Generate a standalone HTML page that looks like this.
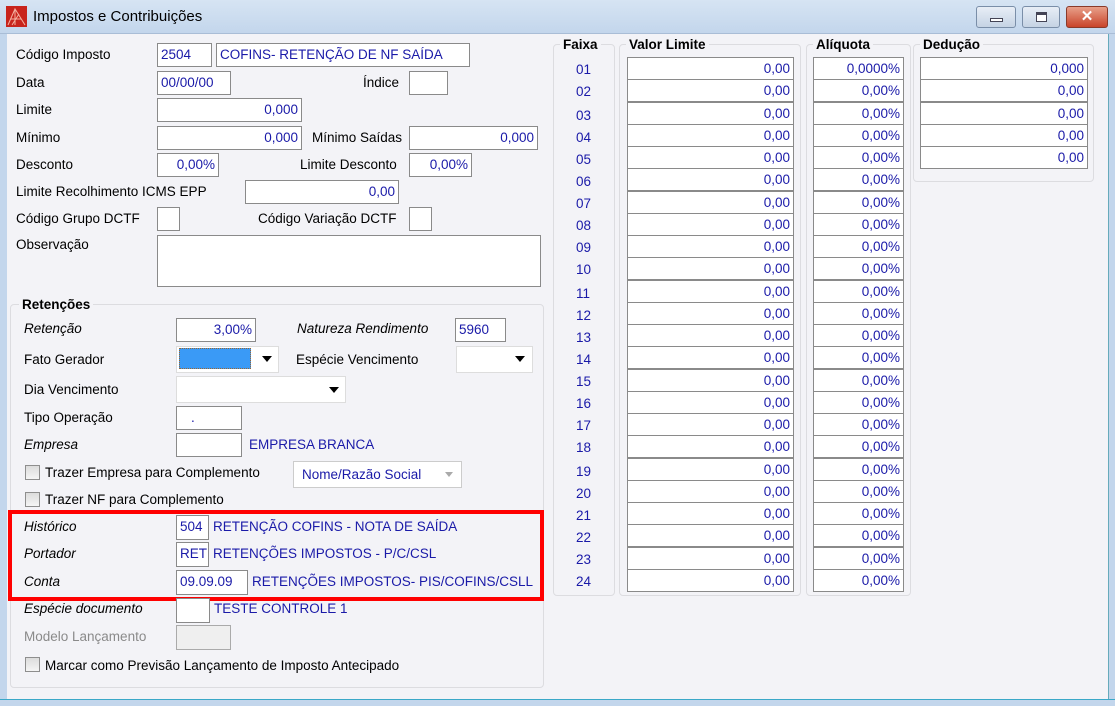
<!DOCTYPE html>
<html><head><meta charset="utf-8"><style>
*{box-sizing:border-box;margin:0;padding:0}
body{width:1115px;height:706px;overflow:hidden;background:#f3f3f7;font-family:"Liberation Sans",sans-serif;font-size:13.5px;color:#000;position:relative}
.a{position:absolute;white-space:nowrap}
.tb{left:0;top:0;width:1115px;height:34px;background:linear-gradient(#d6e4f3,#c3d6ec);border-bottom:1px solid #a9bdd6}
.in{position:absolute;background:#fff;border:1px solid #8a8a8a;color:#1a1aa8;padding:0 3px;line-height:22px;white-space:nowrap;overflow:hidden}
.r{text-align:right}
.lb{position:absolute;white-space:nowrap;line-height:16px}
.it{font-style:italic}
.bl{color:#1a1aa8}
.gb{position:absolute;border:1px solid #dcdce0;border-radius:4px}
.gt{position:absolute;background:#f3f3f7;font-weight:bold;padding:0 3px;line-height:16px}
.cb{position:absolute;width:15px;height:15px;border:1px solid #8e8e8e;background:linear-gradient(#dcdcdc,#f5f5f5)}
.dd{position:absolute;width:0;height:0;border-left:5px solid transparent;border-right:5px solid transparent;border-top:6px solid #000}
.row .in{height:23px;line-height:21px;text-align:right}
</style></head><body>
<div class="a tb"></div>
<svg class="a" style="left:6px;top:6px" width="21" height="21" viewBox="0 0 21 21"><rect width="21" height="21" fill="#c8241c"/><path d="M2 19 L9 3 L19 19 M5 13 L15 13 M9 3 L9 19 M13 8 L6 19" stroke="#f3b0a0" stroke-width="1" fill="none"/></svg>
<div class="a" style="left:33px;top:8px;font-size:15px">Impostos e Contribuições</div>
<div class="a" style="left:976px;top:6px;width:40px;height:22px;border:1px solid #7a8ea8;border-radius:3px;background:linear-gradient(#e8eef6,#c5d3e4)"><div class="a" style="left:13px;top:11px;width:13px;height:4px;border:1px solid #445;background:#fff"></div></div>
<div class="a" style="left:1022px;top:6px;width:38px;height:22px;border:1px solid #7a8ea8;border-radius:3px;background:linear-gradient(#e8eef6,#c5d3e4)"><div class="a" style="left:13px;top:5px;width:11px;height:10px;border:1px solid #445;border-top-width:3px;background:#fff"></div></div>
<div class="a" style="left:1066px;top:6px;width:42px;height:22px;border:1px solid #8a3a2a;border-radius:3px;background:linear-gradient(#e8a08a,#c9442a);color:#fff;font-weight:bold;text-align:center;line-height:20px;font-size:15px">✕</div>
<div class="a" style="left:0;top:34px;width:7px;height:672px;background:#c3d6ec"></div>
<div class="a" style="left:1108px;top:34px;width:7px;height:672px;background:#c3d6ec;border-left:1px solid #6ab"></div>
<div class="a" style="left:0;top:699px;width:1115px;height:7px;background:#c3d6ec;border-top:1px solid #3aa8c8"></div>

<div class="lb" style="left:16px;top:47px">Código Imposto</div>
<div class="in" style="left:157px;top:43px;width:55px;height:24px">2504</div>
<div class="in" style="left:216px;top:43px;width:254px;height:24px">COFINS- RETENÇÃO DE NF SAÍDA</div>
<div class="lb" style="left:16px;top:75px">Data</div>
<div class="in" style="left:157px;top:71px;width:74px;height:24px">00/00/00</div>
<div class="lb" style="left:363px;top:75px">Índice</div>
<div class="in" style="left:409px;top:71px;width:39px;height:24px"></div>
<div class="lb" style="left:16px;top:102px">Limite</div>
<div class="in r" style="left:157px;top:98px;width:145px;height:24px">0,000</div>
<div class="lb" style="left:16px;top:130px">Mínimo</div>
<div class="in r" style="left:157px;top:126px;width:145px;height:24px">0,000</div>
<div class="lb" style="left:312px;top:130px">Mínimo Saídas</div>
<div class="in r" style="left:409px;top:126px;width:129px;height:24px">0,000</div>
<div class="lb" style="left:16px;top:157px">Desconto</div>
<div class="in r" style="left:157px;top:153px;width:62px;height:24px">0,00%</div>
<div class="lb" style="left:300px;top:157px">Limite Desconto</div>
<div class="in r" style="left:409px;top:153px;width:63px;height:24px">0,00%</div>
<div class="lb" style="left:16px;top:184px">Limite Recolhimento ICMS EPP</div>
<div class="in r" style="left:245px;top:180px;width:154px;height:24px">0,00</div>
<div class="lb" style="left:16px;top:211px">Código Grupo DCTF</div>
<div class="in" style="left:157px;top:207px;width:23px;height:24px"></div>
<div class="lb" style="left:258px;top:211px">Código Variação DCTF</div>
<div class="in" style="left:409px;top:207px;width:23px;height:24px"></div>
<div class="lb" style="left:16px;top:237px">Observação</div>
<div class="in" style="left:157px;top:235px;width:384px;height:52px"></div>

<div class="gb" style="left:10px;top:304px;width:534px;height:384px"></div>
<div class="gt" style="left:19px;top:297px">Retenções</div>
<div class="lb it" style="left:24px;top:321px">Retenção</div>
<div class="in r" style="left:176px;top:318px;width:80px;height:24px">3,00%</div>
<div class="lb it" style="left:297px;top:321px">Natureza Rendimento</div>
<div class="in" style="left:455px;top:318px;width:51px;height:24px">5960</div>
<div class="lb" style="left:24px;top:352px">Fato Gerador</div>
<div class="in" style="left:176px;top:346px;width:103px;height:27px;border-color:#ddd"></div>
<div class="a" style="left:179px;top:348px;width:72px;height:21px;background:#3a9af6;border:1px dotted #963"></div>
<div class="dd" style="left:262px;top:356px"></div>
<div class="lb" style="left:296px;top:352px">Espécie Vencimento</div>
<div class="in" style="left:456px;top:346px;width:77px;height:27px;border-color:#ddd"></div>
<div class="dd" style="left:515px;top:356px"></div>
<div class="lb" style="left:24px;top:382px">Dia Vencimento</div>
<div class="in" style="left:176px;top:376px;width:170px;height:27px;border-color:#ddd"></div>
<div class="dd" style="left:329px;top:387px"></div>
<div class="lb" style="left:24px;top:410px">Tipo Operação</div>
<div class="in" style="left:176px;top:406px;width:66px;height:24px;padding-left:14px">.</div>
<div class="lb it" style="left:24px;top:437px">Empresa</div>
<div class="in" style="left:176px;top:433px;width:66px;height:24px"></div>
<div class="lb bl" style="left:249px;top:437px">EMPRESA BRANCA</div>
<div class="cb" style="left:25px;top:465px"></div>
<div class="lb" style="left:45px;top:465px">Trazer Empresa para Complemento</div>
<div class="in" style="left:293px;top:461px;width:169px;height:27px;border-color:#ccc;padding-left:8px;line-height:25px">Nome/Razão Social</div>
<div class="a" style="left:445px;top:472px;border-left:4px solid transparent;border-right:4px solid transparent;border-top:5px solid #aaa"></div>
<div class="cb" style="left:25px;top:492px"></div>
<div class="lb" style="left:45px;top:492px">Trazer NF para Complemento</div>

<div class="a" style="left:8px;top:510px;width:536px;height:91px;border:4px solid #f00"></div>
<div class="lb it" style="left:24px;top:519px">Histórico</div>
<div class="in" style="left:176px;top:515px;width:33px;height:25px;color:#1a1aa8">504</div>
<div class="lb bl" style="left:213px;top:519px">RETENÇÃO COFINS - NOTA DE SAÍDA</div>
<div class="lb it" style="left:24px;top:546px">Portador</div>
<div class="in" style="left:176px;top:542px;width:33px;height:25px">RET</div>
<div class="lb bl" style="left:213px;top:546px">RETENÇÕES IMPOSTOS - P/C/CSL</div>
<div class="lb it" style="left:24px;top:574px">Conta</div>
<div class="in" style="left:176px;top:570px;width:72px;height:25px">09.09.09</div>
<div class="lb bl" style="left:252px;top:574px">RETENÇÕES IMPOSTOS- PIS/COFINS/CSLL</div>
<div class="lb it" style="left:24px;top:601px">Espécie documento</div>
<div class="in" style="left:176px;top:598px;width:34px;height:25px"></div>
<div class="lb bl" style="left:214px;top:601px">TESTE CONTROLE 1</div>
<div class="lb" style="left:24px;top:629px;color:#8a8a8a">Modelo Lançamento</div>
<div class="in" style="left:176px;top:625px;width:55px;height:25px;background:#efefef;border-color:#aaa"></div>
<div class="cb" style="left:25px;top:657px"></div>
<div class="lb" style="left:45px;top:658px">Marcar como Previsão Lançamento de Imposto Antecipado</div>

<div class="gb" style="left:553px;top:44px;width:62px;height:552px"></div>
<div class="gb" style="left:619px;top:44px;width:182px;height:552px"></div>
<div class="gb" style="left:806px;top:44px;width:105px;height:552px"></div>
<div class="gb" style="left:913px;top:44px;width:181px;height:138px"></div>
<div class="gt" style="left:560px;top:37px">Faixa</div>
<div class="gt" style="left:626px;top:37px">Valor Limite</div>
<div class="gt" style="left:813px;top:37px">Alíquota</div>
<div class="gt" style="left:920px;top:37px">Dedução</div>

<div class="row">
<div class="lb bl" style="left:576px;top:62px">01</div><div class="in" style="left:627px;top:57px;width:167px">0,00</div><div class="in" style="left:813px;top:57px;width:91px">0,0000%</div><div class="in" style="left:920px;top:57px;width:168px">0,000</div>
<div class="lb bl" style="left:576px;top:84px">02</div><div class="in" style="left:627px;top:79px;width:167px">0,00</div><div class="in" style="left:813px;top:79px;width:91px">0,00%</div><div class="in" style="left:920px;top:79px;width:168px">0,00</div>
<div class="lb bl" style="left:576px;top:108px">03</div><div class="in" style="left:627px;top:102px;width:167px">0,00</div><div class="in" style="left:813px;top:102px;width:91px">0,00%</div><div class="in" style="left:920px;top:102px;width:168px">0,00</div>
<div class="lb bl" style="left:576px;top:130px">04</div><div class="in" style="left:627px;top:124px;width:167px">0,00</div><div class="in" style="left:813px;top:124px;width:91px">0,00%</div><div class="in" style="left:920px;top:124px;width:168px">0,00</div>
<div class="lb bl" style="left:576px;top:152px">05</div><div class="in" style="left:627px;top:146px;width:167px">0,00</div><div class="in" style="left:813px;top:146px;width:91px">0,00%</div><div class="in" style="left:920px;top:146px;width:168px">0,00</div>
<div class="lb bl" style="left:576px;top:174px">06</div><div class="in" style="left:627px;top:168px;width:167px">0,00</div><div class="in" style="left:813px;top:168px;width:91px">0,00%</div>
<div class="lb bl" style="left:576px;top:196px">07</div><div class="in" style="left:627px;top:191px;width:167px">0,00</div><div class="in" style="left:813px;top:191px;width:91px">0,00%</div>
<div class="lb bl" style="left:576px;top:218px">08</div><div class="in" style="left:627px;top:213px;width:167px">0,00</div><div class="in" style="left:813px;top:213px;width:91px">0,00%</div>
<div class="lb bl" style="left:576px;top:240px">09</div><div class="in" style="left:627px;top:235px;width:167px">0,00</div><div class="in" style="left:813px;top:235px;width:91px">0,00%</div>
<div class="lb bl" style="left:576px;top:262px">10</div><div class="in" style="left:627px;top:257px;width:167px">0,00</div><div class="in" style="left:813px;top:257px;width:91px">0,00%</div>
<div class="lb bl" style="left:576px;top:286px">11</div><div class="in" style="left:627px;top:280px;width:167px">0,00</div><div class="in" style="left:813px;top:280px;width:91px">0,00%</div>
<div class="lb bl" style="left:576px;top:308px">12</div><div class="in" style="left:627px;top:302px;width:167px">0,00</div><div class="in" style="left:813px;top:302px;width:91px">0,00%</div>
<div class="lb bl" style="left:576px;top:330px">13</div><div class="in" style="left:627px;top:324px;width:167px">0,00</div><div class="in" style="left:813px;top:324px;width:91px">0,00%</div>
<div class="lb bl" style="left:576px;top:352px">14</div><div class="in" style="left:627px;top:346px;width:167px">0,00</div><div class="in" style="left:813px;top:346px;width:91px">0,00%</div>
<div class="lb bl" style="left:576px;top:374px">15</div><div class="in" style="left:627px;top:369px;width:167px">0,00</div><div class="in" style="left:813px;top:369px;width:91px">0,00%</div>
<div class="lb bl" style="left:576px;top:396px">16</div><div class="in" style="left:627px;top:391px;width:167px">0,00</div><div class="in" style="left:813px;top:391px;width:91px">0,00%</div>
<div class="lb bl" style="left:576px;top:418px">17</div><div class="in" style="left:627px;top:413px;width:167px">0,00</div><div class="in" style="left:813px;top:413px;width:91px">0,00%</div>
<div class="lb bl" style="left:576px;top:440px">18</div><div class="in" style="left:627px;top:435px;width:167px">0,00</div><div class="in" style="left:813px;top:435px;width:91px">0,00%</div>
<div class="lb bl" style="left:576px;top:464px">19</div><div class="in" style="left:627px;top:458px;width:167px">0,00</div><div class="in" style="left:813px;top:458px;width:91px">0,00%</div>
<div class="lb bl" style="left:576px;top:486px">20</div><div class="in" style="left:627px;top:480px;width:167px">0,00</div><div class="in" style="left:813px;top:480px;width:91px">0,00%</div>
<div class="lb bl" style="left:576px;top:508px">21</div><div class="in" style="left:627px;top:502px;width:167px">0,00</div><div class="in" style="left:813px;top:502px;width:91px">0,00%</div>
<div class="lb bl" style="left:576px;top:530px">22</div><div class="in" style="left:627px;top:524px;width:167px">0,00</div><div class="in" style="left:813px;top:524px;width:91px">0,00%</div>
<div class="lb bl" style="left:576px;top:552px">23</div><div class="in" style="left:627px;top:547px;width:167px">0,00</div><div class="in" style="left:813px;top:547px;width:91px">0,00%</div>
<div class="lb bl" style="left:576px;top:574px">24</div><div class="in" style="left:627px;top:569px;width:167px">0,00</div><div class="in" style="left:813px;top:569px;width:91px">0,00%</div>
</div>
</body></html>
